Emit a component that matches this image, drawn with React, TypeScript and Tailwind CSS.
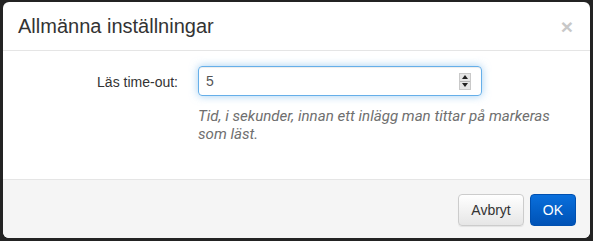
export default function App() {
  return (
    <div className="h-[241px] w-[593px] overflow-hidden bg-[#232323] pl-[3px] pt-[2px] font-['Liberation_Sans',Arial,sans-serif]">
      <div className="flex h-[236px] w-[587px] flex-col overflow-hidden rounded-[6px] bg-white">
        {/* Header */}
        <div className="flex h-[49px] shrink-0 items-center justify-between border-b border-[#e5e5e5] pl-[15px] pr-[17px]">
          <h4 className="pb-[1px] text-[20px] leading-[24px] text-[#333]">Allmänna inställningar</h4>
          <span className="text-[21px] font-bold leading-none text-[#c8c8c8]">×</span>
        </div>

        {/* Body */}
        <div className="flex flex-1 pt-[15px]">
          <label className="w-[175px] pt-[6px] text-right text-[14px] leading-[20px] text-[#333]">
            Läs time-out:
          </label>
          <div className="ml-[20px] flex flex-col">
            <div className="flex h-[30px] w-[284px] items-center justify-between rounded-[4px] border border-[#66afe9] pl-[7px] pr-[10px] shadow-[inset_0_1px_1px_rgba(0,0,0,0.075),0_0_8px_rgba(102,175,233,0.6)]">
              <span className="text-[14px] text-[#555]">5</span>
              <div className="flex h-[17px] w-[12px] flex-col border border-[#c9c9c9] bg-[#e6e6e6]">
                <div className="flex flex-1 items-center justify-center border-b border-[#b5b5b5]">
                  <div className="h-0 w-0 border-x-[3px] border-b-[4px] border-x-transparent border-b-[#222]" />
                </div>
                <div className="flex flex-1 items-center justify-center">
                  <div className="h-0 w-0 border-x-[3px] border-t-[4px] border-x-transparent border-t-[#222]" />
                </div>
              </div>
            </div>
            <p className="mt-[11px] w-[370px] font-['Roboto',sans-serif] text-[15.1px] italic leading-[18px] text-[#6f6f6f]">
              Tid, i sekunder, innan ett inlägg man tittar på markeras som läst.
            </p>
          </div>
        </div>

        {/* Footer */}
        <div className="flex h-[59px] shrink-0 items-start justify-end gap-[6px] border-t border-[#e5e5e5] bg-[#f5f5f5] pr-[14px] pt-[14px]">
          <button className="h-[32px] rounded-[4px] border border-[#cccccc] bg-gradient-to-b from-white to-[#e6e6e6] px-[12px] text-[14px] text-[#333] shadow-[inset_0_1px_0_rgba(255,255,255,0.15),0_1px_1px_rgba(0,0,0,0.075)]">
            Avbryt
          </button>
          <button className="h-[32px] rounded-[4px] border border-[#0050b0] bg-gradient-to-b from-[#0a6fdc] to-[#0052b6] px-[12px] text-[14px] text-white">
            OK
          </button>
        </div>
      </div>
    </div>
  );
}
